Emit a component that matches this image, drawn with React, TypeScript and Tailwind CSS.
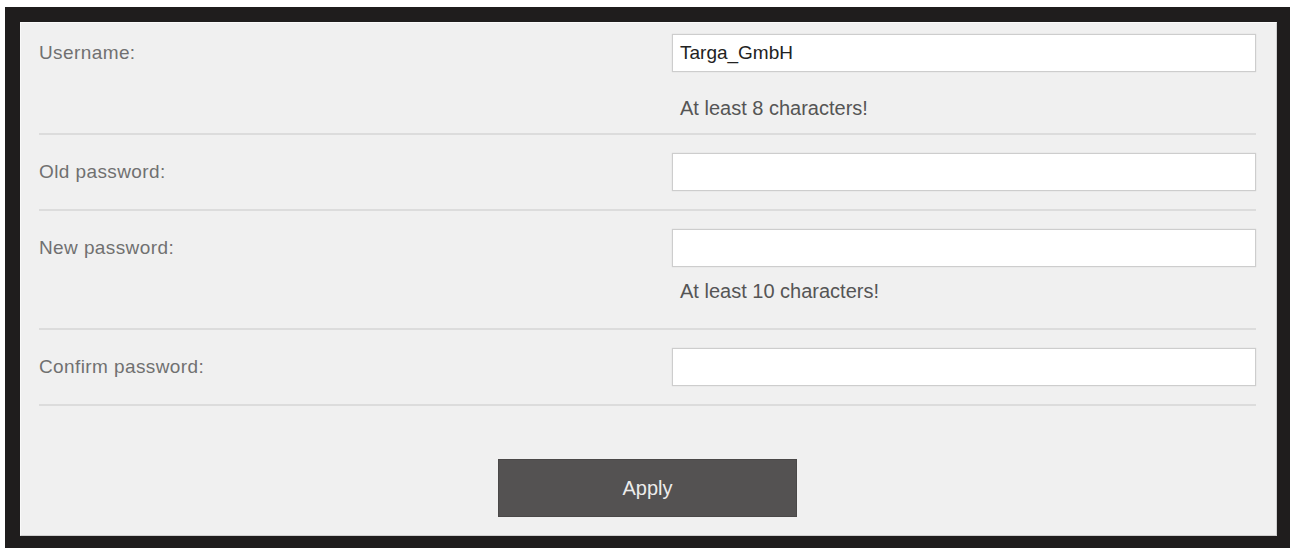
import React from "react";

const font = { fontFamily: '"Liberation Sans", Arial, sans-serif' };

function Divider() {
  return <div className="h-[2px] bg-[#dcdcdc]" />;
}

function Row({
  label,
  value,
  hint,
  hintClass,
  first,
}: {
  label: string;
  value?: string;
  hint?: string;
  hintClass?: string;
  first?: boolean;
}) {
  return (
    <div className={first ? "" : "pt-[18px]"}>
      <div className="flex items-center h-[38px]">
        <div className="w-[633px] text-[19px] text-[#707070] tracking-[0.4px]">{label}</div>
        <div className="flex-1 h-full bg-white border border-[#cdcdcd] shadow-[0_0_1px_rgba(0,0,0,0.15)] flex items-center pl-[7px] text-[19px] text-[#222]">
          {value}
        </div>
      </div>
      {hint ? (
        <div className={"h-[61px] pl-[641px] text-[20px] leading-[24px] text-[#555] " + (hintClass ?? "")}>
          {hint}
        </div>
      ) : (
        <div className="h-[18px]" />
      )}
      <Divider />
    </div>
  );
}

export default function App() {
  return (
    <div className="w-[1290px] h-[548px] bg-white pl-[5px] pt-[7px]" style={font}>
      <div className="w-full h-full bg-[#1f1d1d] pl-[15px] pt-[15px] pr-[13px] pb-[12px]">
        <div className="w-full h-full bg-[#f0f0f0] border border-t-[#fafafa] border-l-[#fafafa] border-r-[#cfcfcf] border-b-[#cfcfcf] pl-[18px] pr-[20px] pt-[11px]">
          <Row label="Username:" value="Targa_GmbH" hint="At least 8 characters!" hintClass="pt-[24px]" first />
          <Row label="Old password:" />
          <Row label="New password:" hint="At least 10 characters!" hintClass="pt-[12px]" />
          <Row label="Confirm password:" />
          <div className="flex justify-center pt-[53px]">
            <button className="w-[299px] h-[58px] bg-[#545252] border border-[#4a4848] text-[#ececec] text-[20px] flex items-center justify-center">
              Apply
            </button>
          </div>
        </div>
      </div>
    </div>
  );
}
